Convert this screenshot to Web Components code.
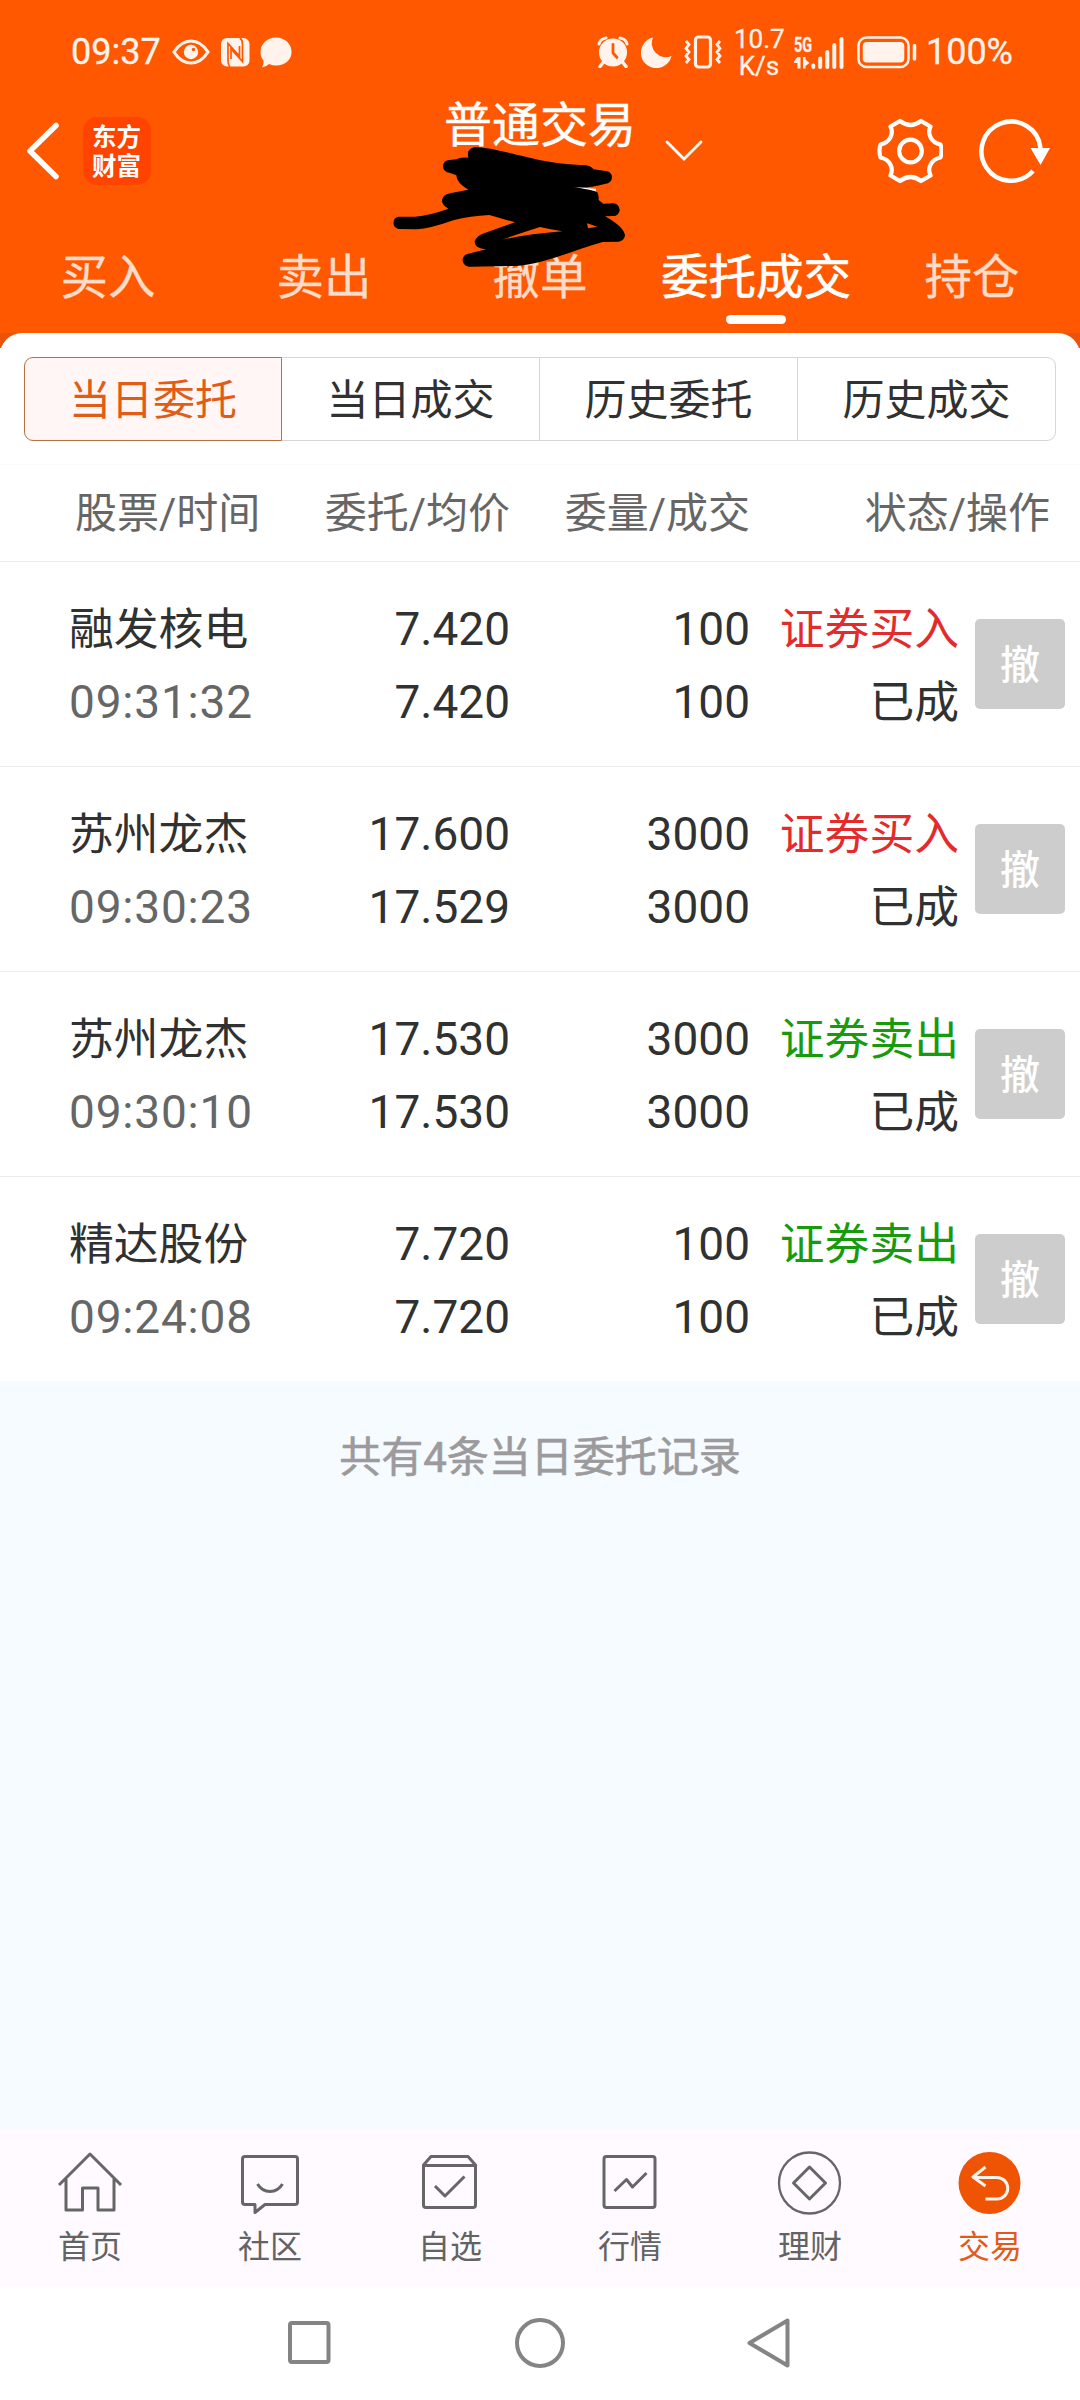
<!DOCTYPE html>
<html lang="zh-CN">
<head>
<meta charset="UTF-8">
<meta name="viewport" content="width=device-width, initial-scale=1.0">
<title>普通交易</title>
<style>
  body {
    margin: 0;
    width: 1080px;
    height: 2400px;
    overflow: hidden;
    background: #fff;
    color: #303131;
    font-family: Roboto, "Noto Sans CJK SC", sans-serif;
  }
</style>
</head>
<body>
<trade-app></trade-app>

<script>
// width, height and drawing of each icon
const ICONS = {
  eye: [38, 26, `<path d="M2 13Q9 2 19 2T36 13Q29 24 19 24T2 13Z" fill="none" stroke="currentColor" stroke-width="3.2"/><circle cx="19" cy="13" r="7.2" fill="currentColor"/><circle cx="21.5" cy="10.5" r="1.7" fill="#ff5800"/>`],
  nfc: [29, 29, `<rect width="28.5" height="28.5" rx="6" fill="currentColor"/><path d="M9 29Q7 27 7 22V5.5L18.5 18V8M19 0Q21.500 2 21.500 6V23.500L10 11V21" fill="none" stroke="#ff5800" stroke-width="1.700"/>`],
  chat: [32, 31, `<path d="M16 .5C25 .5 31.500 7 31.500 15S25 28.500 16 28.500Q12.500 28.500 9 27Q6 30 2 30.500Q4 27 3.500 23.500Q.5 20 .5 15C.5 7 7 .5 16 .5Z" fill="currentColor"/>`],
  alarm: [32, 32, `<circle cx="16" cy="16.500" r="14" fill="currentColor"/><path d="M2 8Q3 3 9 2M30 8Q29 3 23 2" fill="none" stroke="currentColor" stroke-width="3" stroke-linecap="round"/><path d="M6.500 26L3 30.500M25.500 26L29 30.500" stroke="currentColor" stroke-width="3.500" stroke-linecap="round"/><path d="M16 8.500V17L20 21.500" fill="none" stroke="#ff5800" stroke-width="2.800" stroke-linecap="round"/>`],
  moon: [31, 31, `<path d="M12 .5A15.500 15.500 0 1 0 30.500 19A14 14 0 0 1 12 .5Z" fill="currentColor"/>`],
  vibrate: [38, 34, `<rect x="11.500" y="2" width="15" height="30" rx="3" fill="none" stroke="currentColor" stroke-width="3.200"/><path d="M2 6L5 9.500L2 13.500L5 17L2 21L5 24.500L2 28M36 6L33 9.500L36 13.500L33 17L36 21L33 24.500L36 28" fill="none" stroke="currentColor" stroke-width="2.800"/>`],
  signal: [51, 33, `<path d="M3.500 32V21L0 25.500V27H3.500ZM3.500 21H6.500V32.500H3.500ZM9 21H11.500V23.500L15.500 27L11.500 30V32.500H9Z" fill="currentColor"/><path d="M19.300 29.500V31M26.200 22.500V31M33.300 16V31M40.300 9V31M47.500 3V31" stroke="currentColor" stroke-width="4" stroke-linecap="round"/>`],
  battery: [61, 33, `<rect x="1.500" y="1.500" width="50" height="29.500" rx="8" fill="none" stroke="currentColor" stroke-width="2.500"/><rect x="5.800" y="6" width="41.500" height="20.500" rx="4" fill="currentColor"/><path d="M57.500 9.500V23" stroke="currentColor" stroke-width="3.500" stroke-linecap="round"/>`],
  back: [34, 58, `<path d="M30 3.500L4 29L30 54.500" fill="none" stroke="#fff" stroke-width="5.500" stroke-linecap="round" stroke-linejoin="round"/>`],
  chevron: [38, 22, `<path d="M2 2L19 19L36 2" fill="none" stroke="#fff" stroke-width="2.800" stroke-linecap="round"/>`],
  gear: [66, 66, `<g transform="translate(33.500 33)" fill="none" stroke="#fff" stroke-width="4.200" stroke-linejoin="round"><path d="M-10.500-30Q0-22 10.500-30L20-24.500C16.500-17 20.500-8.500 30-6.500Q32 0 30 6.500C20.500 8.500 16.500 17 20 24.500L10.500 30Q0 22-10.500 30L-20 24.500C-16.500 17-20.500 8.500-30 6.500Q-32 0-30-6.500C-20.500-8.500-16.500-17-20-24.500Z"/><circle r="11.300"/></g>`],
  refresh: [72, 66, `<path d="M61.500 30A29.600 29.600 0 1 0 54 53" fill="none" stroke="#fff" stroke-width="4.500"/><path d="M51.500 30H71L61.500 47Z" fill="#fff"/>`],
  home: [70, 66, `<path d="M4 35L35 4L66 35M11 29V60H27.500V38H43V60H59V29"/>`],
  community: [70, 66, `<path d="M10 6.500H60Q62.500 6.500 62.500 9V52Q62.500 54.500 60 54.500H30L20 62.500V54.500H10Q7.500 54.500 7.500 52V9Q7.500 6.500 10 6.500Z"/><path d="M22.500 34Q27 41.500 35 41.500T47.500 34"/>`],
  watch: [70, 66, `<path d="M8.500 15L16 6.500H53L60.500 15V55Q60.500 57.500 58 57.500H11Q8.500 57.500 8.500 55ZM8.500 15.500H60.500M20 36L30 46L49.500 26.500"/>`],
  market: [70, 66, `<rect x="9" y="6.500" width="51" height="51" rx="2.500"/><path d="M19.500 41L31.500 29.500L37.500 37L51.500 23"/>`],
  wealth: [70, 66, `<circle cx="34.500" cy="33" r="30.500" stroke-width="2.300"/><path d="M34.500 17L50.500 33L34.500 49L18.500 33Z"/>`],
  trade: [70, 66, `<circle cx="34.500" cy="33" r="31" fill="#ee5404" stroke="none"/><path d="M30.500 17L18 27L30.500 36M18 27.500H42A10.700 10.700 0 0 1 42 49H30.500" stroke="#fff3ea" stroke-width="3"/>`],
  recent: [50, 52, `<rect x="6" y="6" width="38.500" height="39" rx="2" fill="none" stroke="#848484" stroke-width="4"/>`],
  circle: [52, 52, `<circle cx="26" cy="26" r="23" fill="none" stroke="#848484" stroke-width="4"/>`],
  triangle: [50, 52, `<path d="M41.500 3.500V48.500L3.500 26Z" fill="none" stroke="#848484" stroke-width="4" stroke-linejoin="round"/>`],
};

class UiIcon extends HTMLElement {
  connectedCallback() {
    const [w, h, body] = ICONS[this.getAttribute('name')];
    this.attachShadow({ mode: 'open' }).innerHTML = `
      <style>
        :host { display: block; flex: none; width: ${w}px; height: ${h}px; }
        svg { display: block; }
      </style>
      <svg width="${w}" height="${h}" viewBox="0 0 ${w} ${h}">${body}</svg>
    `;
  }
}
customElements.define('ui-icon', UiIcon);

class StatusBar extends HTMLElement {
  connectedCallback() {
    this.attachShadow({ mode: 'open' }).innerHTML = `
      <style>
        :host {
          display: flex;
          align-items: center;
          box-sizing: border-box;
          height: 88px;
          padding: 16px 67px 0 71px;
          color: #fff3ec;
          font-size: 36px;
          line-height: 36px;
          -webkit-text-stroke: .3px;
        }
        .time { width: 90px; margin-right: 11px; }
        .spacer { flex: 1; }
        .speed {
          width: 50px;
          margin: 1px 10px 0 12px;
          text-align: center;
          font-size: 26px;
          line-height: 27px;
        }
        .net { position: relative; margin-right: 12px; }
        .net span {
          position: absolute;
          left: 0;
          top: -1px;
          font-size: 20px;
          line-height: 20px;
          font-weight: 700;
          transform: scaleX(.72);
          transform-origin: left;
        }
      </style>
      <span class="time">09:37</span>
      <ui-icon name="eye"></ui-icon>
      <ui-icon name="nfc" style="margin-left:11px"></ui-icon>
      <ui-icon name="chat" style="margin-left:10px"></ui-icon>
      <span class="spacer"></span>
      <ui-icon name="alarm"></ui-icon>
      <ui-icon name="moon" style="margin-left:12px"></ui-icon>
      <ui-icon name="vibrate" style="margin-left:12px"></ui-icon>
      <div class="speed">10.7<br>K/s</div>
      <div class="net"><span>5G</span><ui-icon name="signal"></ui-icon></div>
      <ui-icon name="battery"></ui-icon>
      <span style="margin-left:8px">100%</span>
    `;
  }
}
customElements.define('status-bar', StatusBar);

class AppHeader extends HTMLElement {
  connectedCallback() {
    this.attachShadow({ mode: 'open' }).innerHTML = `
      <style>
        :host {
          display: grid;
          grid-template-columns: 1fr auto 1fr;
          height: 126px;
          color: #fff;
        }
        .side { display: flex; align-items: center; }
        .left { padding-left: 26px; }
        .right { padding: 0 29px 0 29px; }
        .logo {
          box-sizing: border-box;
          width: 68px;
          height: 68px;
          margin-left: 23px;
          padding: 4px 9px;
          border-radius: 14px;
          background: #ff4300;
          font: 700 24.500px/29px "Noto Sans CJK SC", sans-serif;
          word-break: break-all;
        }
        h1 {
          margin: 14px 0 0;
          font-size: 48px;
          line-height: 48px;
          font-weight: 400;
          -webkit-text-stroke: .4px;
        }
        .gear { margin: 0 36px 0 auto; }
      </style>
      <div class="side left">
        <ui-icon name="back"></ui-icon>
        <div class="logo">东方财富</div>
      </div>
      <h1><slot></slot></h1>
      <div class="side right">
        <ui-icon name="chevron"></ui-icon>
        <ui-icon name="gear" class="gear"></ui-icon>
        <ui-icon name="refresh"></ui-icon>
      </div>
    `;
  }
}
customElements.define('app-header', AppHeader);

class NavTabs extends HTMLElement {
  connectedCallback() {
    const active = this.getAttribute('active');
    const items = this.getAttribute('items').split(',');
    this.attachShadow({ mode: 'open' }).innerHTML = `
      <style>
        :host {
          display: grid;
          grid-template-columns: repeat(5, 1fr);
          height: 119px;
          font-size: 47.500px;
          color: #ffdcc9;
        }
        .tab {
          display: flex;
          flex-direction: column;
          align-items: center;
          padding-top: 40px;
          line-height: 48px;
          white-space: nowrap;
          -webkit-text-stroke: .3px;
        }
        .active { color: #fff; -webkit-text-stroke: .7px; }
        .active::after {
          content: '';
          width: 60px;
          height: 9px;
          margin-top: 13px;
          border-radius: 5px;
          background: #fff;
        }
      </style>
      ${items.map(t => `<div class="tab ${t === active ? 'active' : ''}">${t}</div>`).join('')}
    `;
  }
}
customElements.define('nav-tabs', NavTabs);

class SegmentControl extends HTMLElement {
  connectedCallback() {
    const items = this.getAttribute('items').split(',');
    this.attachShadow({ mode: 'open' }).innerHTML = `
      <style>
        :host {
          display: grid;
          grid-template-columns: repeat(4, 1fr);
          height: 84px;
          margin: 0 24px;
          font-size: 42px;
          line-height: 85px;
          text-align: center;
        }
        .seg {
          box-sizing: border-box;
          height: 84px;
          border: 1px solid #d5d5da;
          border-left-width: 0;
        }
        .seg:first-of-type {
          border: 1px solid #b9713f;
          border-radius: 9px 0 0 9px;
          background: #fff6f5;
          color: #e15c16;
        }
        .seg:last-of-type { border-radius: 0 9px 9px 0; }
      </style>
      ${items.map(t => `<div class="seg">${t}</div>`).join('')}
    `;
  }
}
customElements.define('segment-control', SegmentControl);

class OrderHead extends HTMLElement {
  connectedCallback() {
    this.attachShadow({ mode: 'open' }).innerHTML = `
      <style>
        :host {
          display: grid;
          grid-template-columns: 435px 240px 300px;
          box-sizing: border-box;
          height: 98px;
          padding-left: 75px;
          border-top: 1px solid #fafafa;
          border-bottom: 1px solid #ececec;
          color: #666;
          font-size: 42px;
          line-height: 98px;
          text-align: right;
        }
        .first { display: flex; justify-content: space-between; }
      </style>
      <div class="first"><span>股票/时间</span><span>委托/均价</span></div>
      <span>委量/成交</span>
      <span>状态/操作</span>
    `;
  }
}
customElements.define('order-head', OrderHead);

class OrderRow extends HTMLElement {
  connectedCallback() {
    const [name, time, price, avg, count, done, side] = this.getAttribute('data').split('|');
    const color = side === '买入' ? '#e32b2b' : '#179b0c';
    this.attachShadow({ mode: 'open' }).innerHTML = `
      <style>
        :host {
          display: grid;
          grid-template-columns: 220px 220px 240px 209px 90px;
          align-items: center;
          box-sizing: border-box;
          height: 205px;
          padding-left: 70px;
          border-bottom: 1px solid #ececec;
          font-size: 44.800px;
          line-height: 73px;
          text-align: right;
          white-space: nowrap;
        }
        .name { text-align: left; text-indent: -1px; }
        .num { font-size: 46px; }
        .time { color: #656666; letter-spacing: .8px; }
        .cell { padding-top: 3px; }
        .cell > div { height: 73px; }
        .side { color: ${color}; }
        button {
          width: 90px;
          height: 90px;
          margin-left: 16px;
          padding: 0 0 5px;
          border: 0;
          border-radius: 5px;
          background: #cdcdcd;
          color: #fff;
          font: 500 40px/80px "Noto Sans CJK SC", sans-serif;
        }
      </style>
      <div class="cell name"><div>${name}</div><div class="num time">${time}</div></div>
      <div class="cell num"><div>${price}</div><div>${avg}</div></div>
      <div class="cell num"><div>${count}</div><div>${done}</div></div>
      <div class="cell"><div class="side">证券${side}</div><div>已成</div></div>
      <button>撤</button>
    `;
  }
}
customElements.define('order-row', OrderRow);

class TabItem extends HTMLElement {
  connectedCallback() {
    const active = this.hasAttribute('active');
    this.attachShadow({ mode: 'open' }).innerHTML = `
      <style>
        :host {
          display: flex;
          flex-direction: column;
          align-items: center;
          padding-top: 20px;
          color: ${active ? '#e25a18' : '#626363'};
          font-size: 32px;
          line-height: 32px;
        }
        ui-icon {
          fill: none;
          stroke: #666;
          stroke-width: 3;
          stroke-linejoin: round;
        }
        span { margin-top: 15px; }
      </style>
      <ui-icon name="${this.getAttribute('icon')}"></ui-icon>
      <span><slot></slot></span>
    `;
  }
}
customElements.define('tab-item', TabItem);

class TabBar extends HTMLElement {
  connectedCallback() {
    this.attachShadow({ mode: 'open' }).innerHTML = `
      <style>
        :host {
          display: grid;
          grid-template-columns: repeat(6, 1fr);
          height: 156px;
          background: #fefaff;
        }
      </style>
      <slot></slot>
    `;
  }
}
customElements.define('tab-bar', TabBar);

class SystemNav extends HTMLElement {
  connectedCallback() {
    this.attachShadow({ mode: 'open' }).innerHTML = `
      <style>
        :host {
          display: flex;
          align-items: center;
          justify-content: center;
          gap: 180px;
          height: 114px;
          background: #fff;
        }
      </style>
      <ui-icon name="recent"></ui-icon>
      <ui-icon name="circle"></ui-icon>
      <ui-icon name="triangle"></ui-icon>
    `;
  }
}
customElements.define('system-nav', SystemNav);

// Black marker strokes covering the account line
class MarkerScribble extends HTMLElement {
  connectedCallback() {
    this.attachShadow({ mode: 'open' }).innerHTML = `
      <style>
        :host { position: absolute; left: 360px; top: 90px; }
        svg { display: block; }
      </style>
      <svg width="360" height="260" viewBox="0 0 1080 780">
        <path d="M645 292L708 296V305L700 304Z" fill="#fff"/>
        <path fill-rule="evenodd" d="M345 171C430 174 520 220 660 225Q690 223 701 238L737 243A19 19 0 0 1 737 281Q690 295 640 291Q700 300 712 307Q717 316 716 330L730 341L760 340A19 19 0 0 1 760 378L735 379Q788 408 795 434A20 20 0 0 1 775 455L728 456C640 480 560 520 470 528L330 530A19 19 0 0 1 325 491L378 478Q343 475 344 454Q350 438 372 430L465 397L388 375Q330 378 280 391Q210 416 170 418L115 417A19 19 0 0 1 115 380L165 380Q210 376 265 356Q245 345 246 330Q248 315 270 310L325 299Q290 280 289 256L268 248A19 19 0 0 1 268 210L290 208Q300 200 325 203Q318 176 345 171ZM427 449Q450 440 540 411Q570 418 607 424Q500 433 427 449ZM681 400Q697 406 712 410L684 415Z"/>
      </svg>
    `;
  }
}
customElements.define('marker-scribble', MarkerScribble);

class TradeApp extends HTMLElement {
  connectedCallback() {
    const orders = [
      '融发核电|09:31:32|7.420|7.420|100|100|买入',
      '苏州龙杰|09:30:23|17.600|17.529|3000|3000|买入',
      '苏州龙杰|09:30:10|17.530|17.530|3000|3000|卖出',
      '精达股份|09:24:08|7.720|7.720|100|100|卖出',
    ];
    this.attachShadow({ mode: 'open' }).innerHTML = `
      <style>
        :host {
          position: relative;
          display: flex;
          flex-direction: column;
          height: 2400px;
        }
        .top { height: 333px; background: #ff5800; }
        .edge { height: 15px; overflow: hidden; background: #eb530c; }
        .edge::before {
          content: '';
          display: block;
          height: 40px;
          border-radius: 22px 22px 0 0;
          background: #fff;
        }
        .sheet { height: 1033px; background: #fff; }
        segment-control { margin-top: 9px; margin-bottom: 23px; }
        .empty {
          flex: 1;
          padding-top: 53px;
          background: #f5fbff;
          color: #9c9a9c;
          font-size: 42px;
          line-height: 48px;
          text-align: center;
          -webkit-text-stroke: .6px;
        }
      </style>
      <div class="top">
        <status-bar></status-bar>
        <app-header>普通交易</app-header>
        <nav-tabs items="买入,卖出,撤单,委托成交,持仓" active="委托成交"></nav-tabs>
      </div>
      <div class="edge"></div>
      <div class="sheet">
        <segment-control items="当日委托,当日成交,历史委托,历史成交"></segment-control>
        <order-head></order-head>
        ${orders.map(o => `<order-row data="${o}"></order-row>`).join('')}
      </div>
      <div class="empty">共有4条当日委托记录</div>
      <tab-bar>
        <tab-item icon="home">首页</tab-item>
        <tab-item icon="community">社区</tab-item>
        <tab-item icon="watch">自选</tab-item>
        <tab-item icon="market">行情</tab-item>
        <tab-item icon="wealth">理财</tab-item>
        <tab-item icon="trade" active>交易</tab-item>
      </tab-bar>
      <system-nav></system-nav>
      <marker-scribble></marker-scribble>
    `;
  }
}
customElements.define('trade-app', TradeApp);
</script>
</body>
</html>
